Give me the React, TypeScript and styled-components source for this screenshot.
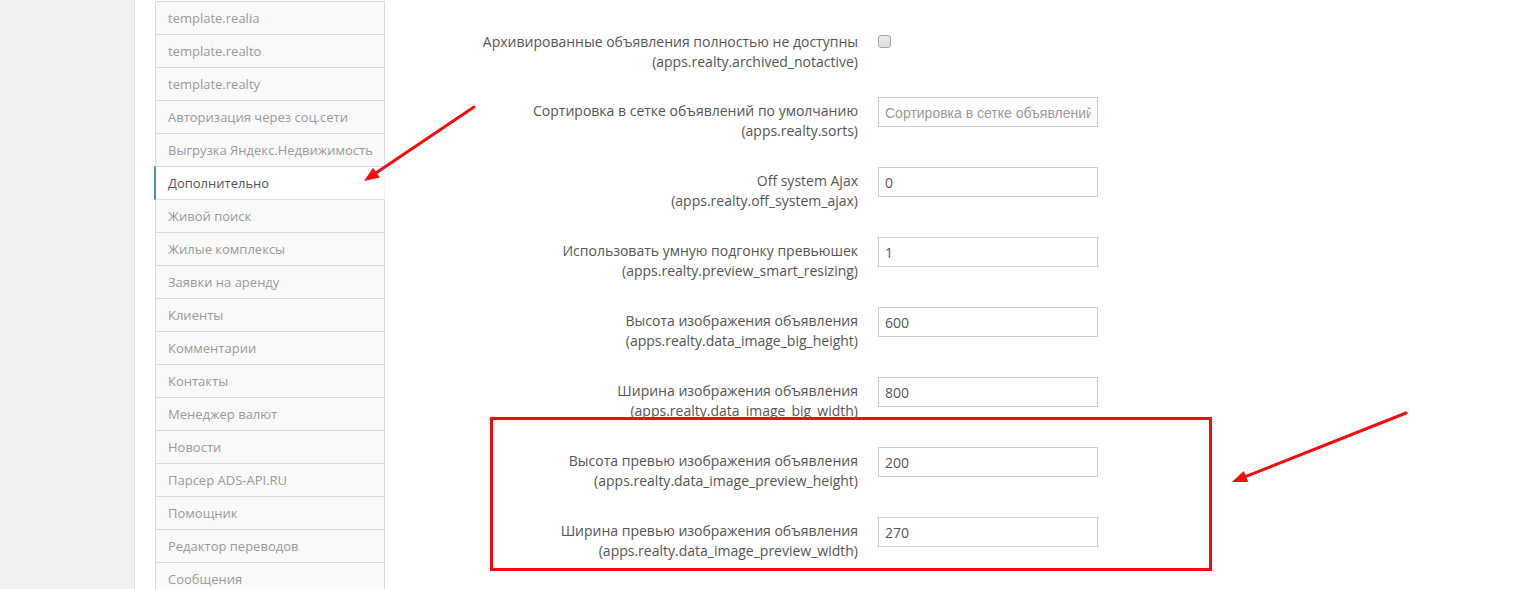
import React from "react";
import styled, { createGlobalStyle } from "styled-components";

const Global = createGlobalStyle`
  html, body { margin: 0; padding: 0; background: #fff; overflow: hidden; }
  body { font-family: "Open Sans", "Liberation Sans", sans-serif; }
  * { box-sizing: border-box; }
`;

const Page = styled.div`
  position: relative;
  display: flex;
  width: 1515px;
  height: 589px;
  overflow: hidden;
`;

const LeftPanel = styled.div`
  width: 135px;
  flex: none;
  background: #f1f1f1;
  border-right: 1px solid #dcdcdc;
`;

const Sidebar = styled.ul`
  list-style: none;
  margin: 1px 0 0 20px;
  padding: 0;
  width: 230px;
  flex: none;
`;

const Item = styled.li<{ $active?: boolean }>`
  position: relative;
  height: 34px;
  margin-bottom: -1px;
  padding: 6px 12px;
  line-height: 20px;
  font-size: 13px;
  color: ${(p) => (p.$active ? "#555" : "#9a9a9a")};
  background: ${(p) => (p.$active ? "#fff" : "#f9f9f9")};
  border: 1px solid #d3dbe4;
  border-right-color: ${(p) => (p.$active ? "#f3f3f3" : "#d3dbe4")};
  white-space: nowrap;
  ${(p) =>
    p.$active &&
    `
    margin-left: -1px;
    border-left: 2px solid #4a8bc2;
    z-index: 1;
  `}
`;

const Form = styled.div`
  display: grid;
  grid-template-columns: 473px 220px;
  column-gap: 20px;
  row-gap: 26px;
  padding-top: 27px;
  align-content: start;
`;

const Label = styled.div<{ $top?: number }>`
  padding-top: ${(p) => p.$top ?? 4}px;
  text-align: right;
  font-size: 14px;
  line-height: 20px;
  color: #555;
  height: 44px;
`;

const Control = styled.div`
  height: 44px;
`;

const TextInput = styled.input`
  display: block;
  width: 220px;
  height: 30px;
  margin: 0;
  padding: 0 6px;
  border: 1px solid #cccccc;
  border-radius: 0;
  font-family: "Open Sans", "Liberation Sans", sans-serif;
  font-size: 14px;
  color: #555;
  background: #fff;
  outline: none;
  &::placeholder {
    font-family: "Liberation Sans", Arial, sans-serif;
    color: #999;
  }
`;

const Check = styled.input`
  appearance: none;
  -webkit-appearance: none;
  display: block;
  margin: 8px 0 0 0;
  width: 13px;
  height: 13px;
  border: 1px solid #a6a6a6;
  border-radius: 3px;
  background: linear-gradient(#ececec, #dcdcdc);
`;

const Overlay = styled.svg`
  position: absolute;
  left: 0;
  top: 0;
  z-index: 10;
  pointer-events: none;
`;

const items = [
  "template.realia",
  "template.realto",
  "template.realty",
  "Авторизация через соц.сети",
  "Выгрузка Яндекс.Недвижимость",
  "Дополнительно",
  "Живой поиск",
  "Жилые комплексы",
  "Заявки на аренду",
  "Клиенты",
  "Комментарии",
  "Контакты",
  "Менеджер валют",
  "Новости",
  "Парсер ADS-API.RU",
  "Помощник",
  "Редактор переводов",
  "Сообщения",
];

type Row = {
  title: string;
  key: string;
  value?: string;
  placeholder?: string;
  checkbox?: boolean;
};

const rows: Row[] = [
  { title: "Архивированные объявления полностью не доступны", key: "apps.realty.archived_notactive", checkbox: true },
  { title: "Сортировка в сетке объявлений по умолчанию", key: "apps.realty.sorts", placeholder: "Сортировка в сетке объявлений по умолчанию" },
  { title: "Off system Ajax", key: "apps.realty.off_system_ajax", value: "0" },
  { title: "Использовать умную подгонку превьюшек", key: "apps.realty.preview_smart_resizing", value: "1" },
  { title: "Высота изображения объявления", key: "apps.realty.data_image_big_height", value: "600" },
  { title: "Ширина изображения объявления", key: "apps.realty.data_image_big_width", value: "800" },
  { title: "Высота превью изображения объявления", key: "apps.realty.data_image_preview_height", value: "200" },
  { title: "Ширина превью изображения объявления", key: "apps.realty.data_image_preview_width", value: "270" },
];

function Arrow({ x1, y1, x2, y2 }: { x1: number; y1: number; x2: number; y2: number }) {
  const dx = x2 - x1;
  const dy = y2 - y1;
  const len = Math.hypot(dx, dy);
  const ux = dx / len;
  const uy = dy / len;
  const hl = 15;
  const hw = 6;
  const bx = x2 - ux * hl;
  const by = y2 - uy * hl;
  const p1 = `${bx - uy * hw},${by + ux * hw}`;
  const p2 = `${bx + uy * hw},${by - ux * hw}`;
  return (
    <g>
      <line x1={x1} y1={y1} x2={bx + ux * 2} y2={by + uy * 2} stroke="#f40d0d" strokeWidth={3} strokeLinecap="round" />
      <polygon points={`${x2},${y2} ${p1} ${p2}`} fill="#f40d0d" />
    </g>
  );
}

export default function App() {
  return (
    <>
      <Global />
      <Page>
        <LeftPanel />
        <Sidebar>
          {items.map((t) => (
            <Item key={t} $active={t === "Дополнительно"}>
              {t}
            </Item>
          ))}
        </Sidebar>
        <Form>
          {rows.map((r) => (
            <React.Fragment key={r.key}>
              <Label $top={r.checkbox ? 5 : 4}>
                {r.title}
                <br />({r.key})
              </Label>
              <Control>
                {r.checkbox ? (
                  <Check type="checkbox" />
                ) : (
                  <TextInput defaultValue={r.value} placeholder={r.placeholder} />
                )}
              </Control>
            </React.Fragment>
          ))}
        </Form>
        <Overlay width={1515} height={589} viewBox="0 0 1515 589">
          <rect x={491.5} y={418.5} width={719} height={151} fill="none" stroke="#f40d0d" strokeWidth={3} />
          <Arrow x1={474} y1={107} x2={364} y2={181} />
          <Arrow x1={1406} y1={413} x2={1232} y2={482} />
        </Overlay>
      </Page>
    </>
  );
}
